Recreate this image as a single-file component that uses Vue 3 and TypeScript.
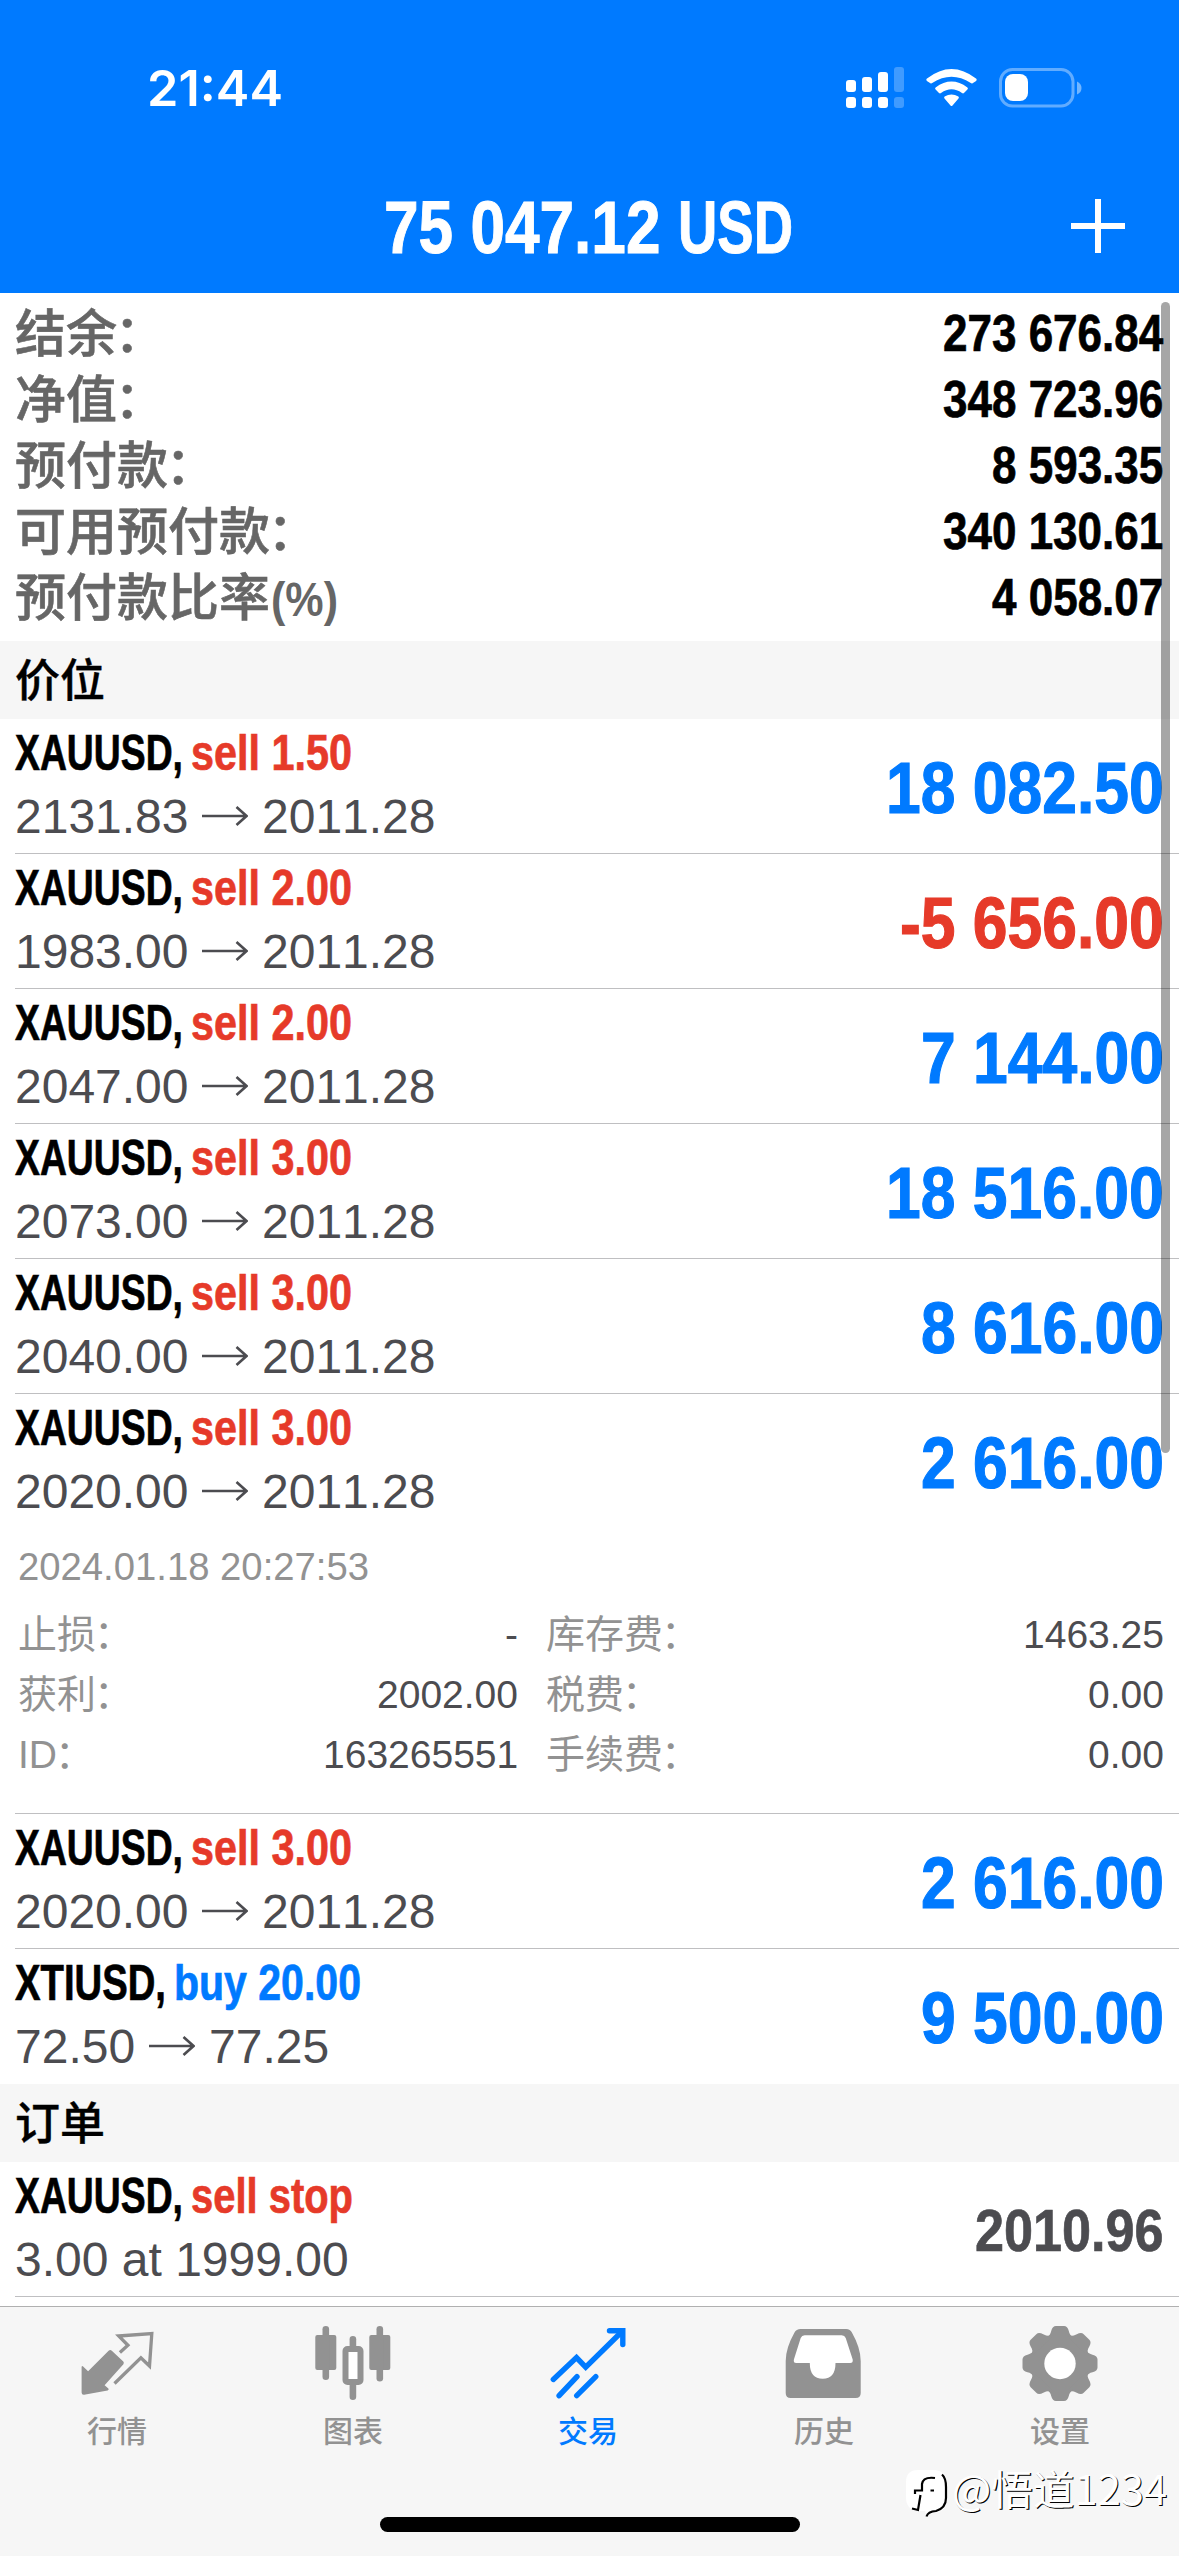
<script setup lang="ts">
import { h, type FunctionalComponent } from 'vue'

interface FitProps {
  text: string
  size: number
  width?: number
  scale?: number
  stretch?: boolean
}

// Advance widths (in em) of the bold sans face; digits are the default, ideographs are one em.
const ADVANCE: Record<string, number> = {
  ' ': 0.278, '.': 0.278, ',': 0.278, ':': 0.278, '-': 0.333, '(': 0.333, ')': 0.333, '%': 0.889,
  A: 0.722, D: 0.722, I: 0.278, S: 0.667, T: 0.611, U: 0.722, X: 0.667,
  b: 0.611, l: 0.278, o: 0.611, p: 0.611, t: 0.333, u: 0.611,
}

const advance = (text: string): number =>
  [...text].reduce((sum, ch) => sum + (ADVANCE[ch] ?? (ch > '\u2fff' ? 1 : 0.556)), 0)

// A single condensed text run; the box is as high as the capitals.
const Fit: FunctionalComponent<FitProps> = (props) => {
  const height = Math.round(props.size * 0.7)
  const natural = advance(props.text) * props.size
  const width = props.width ?? natural * (props.scale ?? 1)
  const sizing = props.stretch
    ? { textLength: width, lengthAdjust: 'spacingAndGlyphs' }
    : { transform: `scale(${(width / natural).toFixed(4)} 1)` }
  // The full-width colon sits a little closer to the word before it.
  const dx = props.text.endsWith('：')
    ? [...props.text].map((ch) => (ch === '：' ? -props.size * 0.05 : 0)).join(' ')
    : undefined
  return h('svg', { width, height, style: { display: 'block', overflow: 'visible', flex: 'none' } }, [
    h('text', { x: 0, y: height, dx, 'font-size': props.size, fill: 'currentColor', ...sizing }, props.text),
  ])
}
Fit.props = { text: String, size: Number, width: Number, scale: Number, stretch: Boolean } as any

const summary = [
  { label: '结余：', value: '273 676.84' },
  { label: '净值：', value: '348 723.96' },
  { label: '预付款：', value: '8 593.35' },
  { label: '可用预付款：', value: '340 130.61' },
  { label: '预付款比率', unit: '(%)', value: '4 058.07' },
]

interface Position {
  symbol: string
  symbolWidth: number
  side: 'sell' | 'buy'
  volume: string
  sideWidth: number
  open: string
  current: string
  profit: string
  details?: boolean
}

const gold = (volume: string, open: string, profit: string, details = false): Position => ({
  symbol: 'XAUUSD,', symbolWidth: 168, side: 'sell', volume, sideWidth: 161,
  open, current: '2011.28', profit, details,
})

const positions: Position[] = [
  gold('1.50', '2131.83', '18 082.50'),
  gold('2.00', '1983.00', '-5 656.00'),
  gold('2.00', '2047.00', '7 144.00'),
  gold('3.00', '2073.00', '18 516.00'),
  gold('3.00', '2040.00', '8 616.00'),
  gold('3.00', '2020.00', '2 616.00', true),
  gold('3.00', '2020.00', '2 616.00'),
  {
    symbol: 'XTIUSD,', symbolWidth: 151, side: 'buy', volume: '20.00', sideWidth: 187,
    open: '72.50', current: '77.25', profit: '9 500.00',
  },
]

const details = [
  { left: '止损：', lv: '-', right: '库存费：', rv: '1463.25' },
  { left: '获利：', lv: '2002.00', right: '税费：', rv: '0.00' },
  { left: 'ID：', lv: '163265551', right: '手续费：', rv: '0.00' },
]

const teeth = [0, 45, 90, 135, 180, 225, 270, 315]
</script>

<template>
  <div class="screen">
    <header class="header">
      <div class="status">
        <Fit class="clock" text="21:44" :size="49" :width="136" stretch />
        <svg class="indicators" width="240" height="44" viewBox="844 66 240 44" fill="#fff">
          <rect x="846" y="80" width="10" height="12" rx="3" />
          <rect x="862" y="77" width="10" height="15" rx="3" />
          <rect x="878" y="72" width="10" height="20" rx="3" />
          <rect x="894" y="67" width="10" height="25" rx="3" opacity=".25" />
          <rect x="846" y="97" width="10" height="11" rx="3" />
          <rect x="862" y="97" width="10" height="11" rx="3" />
          <rect x="878" y="97" width="10" height="11" rx="3" />
          <rect x="894" y="97" width="10" height="11" rx="3" opacity=".25" />
          <path d="M927 78.5Q951.500 59.500 976 78.500Q977.300 79.700 976.100 80.900L972.600 83.200Q971.700 83.800 970.800 83Q951.500 70.500 932.200 83Q931.300 83.800 930.400 83.200L926.900 80.900Q925.700 79.700 927 78.500Z" />
          <path d="M935.600 87.400Q951.500 75.800 967.400 87.400Q968.500 88.400 967.400 89.400L964 93Q963 93.800 962 93Q951.500 85.500 941 93Q940 93.800 939 93L935.600 89.400Q934.500 88.400 935.600 87.400Z" />
          <path d="M944.600 96.600Q951.500 92.600 958.400 96.600Q959.400 97.600 958.500 98.600L952.500 105.400Q951.500 106.400 950.500 105.400L944.500 98.600Q943.600 97.600 944.600 96.600Z" />
          <rect x="1000.500" y="69.500" width="72.500" height="36.500" rx="12" fill="none" stroke="#fff" stroke-width="3" opacity=".38" />
          <rect x="1005" y="74" width="23" height="27" rx="8" />
          <path d="M1077 81.500Q1081.500 83.500 1081.500 88Q1081.500 92.500 1077 94.500Z" opacity=".45" />
        </svg>
      </div>
      <div class="title">
        <div class="amount">
          <Fit text="75 047.12" :size="74" :scale="0.84" />
          <Fit text="USD" :size="75" :width="115" />
        </div>
        <svg class="plus" width="54" height="54" viewBox="0 0 54 54">
          <path d="M0 27H54M27 0V54" stroke="#fff" stroke-width="6" />
        </svg>
      </div>
    </header>

    <section class="summary">
      <div v-for="row in summary" :key="row.label" class="summary-row">
        <div class="summary-label">
          <Fit :text="row.label" :size="51" />
          <Fit v-if="row.unit" class="unit" :text="row.unit" :size="49" :width="67" />
        </div>
        <Fit class="bold" :text="row.value" :size="51" :scale="0.863" />
      </div>
    </section>

    <h2 class="band"><Fit text="价位" :size="45" /></h2>

    <article v-for="(p, i) in positions" :key="i" class="item" :class="{ open: p.details }">
      <div class="row">
        <div class="info">
          <div class="line bold">
            <Fit :text="p.symbol" :size="50" :width="p.symbolWidth" />
            <Fit :class="p.side" :text="`${p.side} ${p.volume}`" :size="50" :width="p.sideWidth" />
          </div>
          <div class="line prices">
            <Fit :text="p.open" :size="48" />
            <svg class="arrow" width="46" height="20" viewBox="0 0 46 20">
              <path d="M0 10H44M34.500 1L44.500 10L34.500 19" fill="none" stroke="currentColor" stroke-width="2.600" />
            </svg>
            <Fit :text="p.current" :size="48" />
          </div>
        </div>
        <Fit class="profit bold" :class="p.profit.startsWith('-') ? 'sell' : 'buy'" :text="p.profit" :size="73" :scale="0.855" />
      </div>
      <div v-if="p.details" class="details">
        <Fit class="muted" text="2024.01.18 20:27:53" :size="39" :width="351" />
        <div class="grid">
          <div v-for="d in details" :key="d.left" class="grid-row">
            <div class="cell first">
              <Fit class="muted" :text="d.left" :size="39" />
              <Fit :text="d.lv" :size="39" />
            </div>
            <div class="cell">
              <Fit class="muted" :text="d.right" :size="39" />
              <Fit :text="d.rv" :size="39" />
            </div>
          </div>
        </div>
      </div>
    </article>

    <h2 class="band"><Fit text="订单" :size="45" /></h2>

    <article class="item">
      <div class="row">
        <div class="info">
          <div class="line bold">
            <Fit text="XAUUSD," :size="50" :width="168" />
            <Fit class="sell" text="sell stop" :size="50" :width="162" />
          </div>
          <div class="line prices"><Fit text="3.00 at 1999.00" :size="48" /></div>
        </div>
        <Fit class="pending bold" text="2010.96" :size="60" :scale="0.87" />
      </div>
    </article>

    <nav class="tabs">
      <a class="tab">
        <svg width="90" height="80" viewBox="72.900 2322 90 80">
          <path d="M81.500 2367Q81.800 2365.500 83 2366.500L88 2371.300L108.500 2350.800Q110.200 2349.300 111.700 2350.800L123.200 2361.500Q124.300 2362.700 123.300 2364.200L104.500 2385.300L108.300 2388.500Q109.200 2390 107.500 2390.500L84 2394.800Q81.500 2395 81.500 2392.500Z" fill="currentColor" />
          <path d="M119.800 2352.500L127.800 2345.300L118.600 2336L151.700 2333.500L149.400 2366L140.800 2357.700L114.400 2383.500" fill="none" stroke="currentColor" stroke-width="3.300" />
        </svg>
        <Fit class="tab-label" text="行情" :size="30" />
      </a>
      <a class="tab">
        <svg width="90" height="80" viewBox="308.700 2322 90 80" fill="currentColor">
          <rect x="315" y="2335" width="21" height="35" rx="2" />
          <rect x="322.200" y="2326" width="6.600" height="54" rx="3.300" />
          <rect x="369" y="2335" width="21" height="35" rx="2" />
          <rect x="376.200" y="2326" width="6.600" height="55.500" rx="3.300" />
          <rect x="349.300" y="2336" width="6.600" height="16" rx="3.300" />
          <rect x="349.300" y="2380" width="6.600" height="20" rx="3.300" />
          <rect x="345.200" y="2349" width="15" height="33" rx="2" fill="#fff" stroke="currentColor" stroke-width="6" />
        </svg>
        <Fit class="tab-label" text="图表" :size="30" />
      </a>
      <a class="tab active">
        <svg width="90" height="80" viewBox="544.500 2322 90 80" fill="none" stroke="currentColor" stroke-width="5.400">
          <path d="M553.800 2379.500L577 2357.600L586.200 2367.200L622.500 2331.500" stroke-linecap="round" stroke-linejoin="miter" />
          <path d="M610 2330.800H623.300V2344.500" stroke-linecap="round" />
          <path d="M559.600 2395.700L577.500 2376.700M577.200 2395.700L596.300 2376.700" stroke-linecap="round" />
        </svg>
        <Fit class="tab-label" text="交易" :size="30" />
      </a>
      <a class="tab">
        <svg width="90" height="80" viewBox="780.300 2322 90 80">
          <path d="M801 2329H846.500Q850.500 2329 852.200 2332.500Q861 2348 861 2361V2393Q861 2398 856 2398H791Q786 2398 786 2393V2361Q786 2348 794.800 2332.500Q796.500 2329 801 2329Z" fill="currentColor" />
          <path d="M805 2335.300H842Q845 2335.300 846 2338L853 2359.500Q853.500 2363 850.500 2363H835.800Q835.800 2378.700 823 2378.700Q810.100 2378.700 810.100 2363H796.500Q793.500 2363 794.200 2359.500L801 2338Q802 2335.300 805 2335.300Z" fill="#fff" />
        </svg>
        <Fit class="tab-label" text="历史" :size="30" />
      </a>
      <a class="tab">
        <svg width="90" height="80" viewBox="1015.700 2322 90 80">
          <g transform="translate(1059.700 2363.500)">
            <circle r="30" fill="currentColor" />
            <path v-for="a in teeth" :key="a" :transform="`rotate(${a})`" d="M-14 -25Q-9.500 -28.500 -8.800 -32.500Q-7.500 -37.500 -4 -37.500H4Q7.500 -37.500 8.800 -32.500Q9.500 -28.500 14 -25Z" fill="currentColor" />
            <circle r="15.700" fill="#fff" />
          </g>
        </svg>
        <Fit class="tab-label" text="设置" :size="30" />
      </a>
    </nav>

    <div class="scrollbar"></div>
    <div class="home"></div>
    <div class="watermark">
      <svg width="42" height="48" viewBox="0 0 42 48">
        <path d="M12 0H27Q41 0 41 14V30Q41 40 31 42.500Q23 43 21 48L19 41H12Q0 40 0 27V12Q0 0 12 0Z" fill="#fff" />
        <path d="M36 4.500Q40 8 40 17V28Q40 38 30 41Q22 41.500 20.500 46.500" fill="none" stroke="#000" stroke-width="2.200" />
        <path d="M29 8Q17 6.500 16 14V20.500H9V24M14.500 25L12 40L6 38.500M24.500 20.500H28" fill="none" stroke="#000" stroke-width="2.200" />
      </svg>
      <Fit class="handle" text="@悟道1234" :size="41" :width="215" stretch />
    </div>
  </div>
</template>

<style>
body {
  margin: 0;
  background: #fff;
}
</style>

<style scoped>
.screen {
  position: relative;
  width: 1179px;
  height: 2556px;
  overflow: hidden;
  display: flex;
  flex-direction: column;
  background: #fff;
  color: #000;
  font-family: "Liberation Sans", "Noto Sans CJK SC", sans-serif;
  font-kerning: none;
}

.header {
  flex: none;
  height: 293px;
  background: #007aff;
  color: #fff;
}

.status {
  display: flex;
  justify-content: space-between;
  align-items: flex-start;
  padding: 66px 95px 0 147px;
  height: 44px;
}

.clock {
  margin-top: 6px;
  font-family: Inter, sans-serif;
  font-weight: 600;
}

.title {
  display: flex;
  align-items: flex-start;
  justify-content: flex-end;
  margin-top: 89px;
  padding-right: 54px;
}

.amount {
  display: flex;
  align-items: flex-end;
  gap: 18px;
  margin: 1px 278px 0 0;
  font-weight: 700;
  stroke: currentColor;
  stroke-width: 1px;
}

.bold {
  font-weight: 700;
  stroke: currentColor;
  stroke-width: 0.7px;
}

.summary {
  flex: none;
  box-sizing: border-box;
  height: 348px;
  padding: 22px 16px 0 15px;
  display: flex;
  flex-direction: column;
  gap: 30px;
}

.summary-row {
  display: flex;
  justify-content: space-between;
  align-items: flex-start;
  height: 36px;
}

.summary-label {
  display: flex;
  align-items: flex-end;
  margin-top: 1px;
  color: #666;
  font-family: "Noto Sans CJK SC", sans-serif;
  font-weight: 500;
  stroke: currentColor;
  stroke-width: 0.6px;
}

.unit {
  margin-left: 1px;
  font-family: "Liberation Sans", sans-serif;
  font-weight: 700;
  stroke: none;
}

.band {
  flex: none;
  box-sizing: border-box;
  height: 78px;
  margin: 0;
  padding: 25px 0 0 15px;
  background: #f6f6f6;
  font-family: "Noto Sans CJK SC", sans-serif;
  font-weight: 500;
  stroke: currentColor;
  stroke-width: 0.4px;
}

.item {
  flex: none;
  box-sizing: border-box;
  height: 135px;
  margin-left: 15px;
  border-bottom: 1px solid #bfbfc1;
}

.item.open {
  height: 420px;
}

.item:has(+ .band) {
  border-bottom: none;
}

.row {
  display: flex;
  justify-content: space-between;
  align-items: flex-start;
  padding-right: 15px;
  height: 134px;
}

.info {
  padding-top: 16px;
  display: flex;
  flex-direction: column;
  gap: 29px;
}

.line {
  display: flex;
  gap: 8px;
}

.prices {
  gap: 14px;
  color: #4c4c50;
}

.arrow {
  margin-top: 7px;
}

.profit {
  margin-top: 43px;
  stroke-width: 1.2px;
}

.pending {
  margin-top: 47px;
  color: #4c4c50;
}

.sell {
  color: #e63a29;
}

.buy {
  color: #007aff;
}

.muted {
  color: #929292;
}

.details {
  padding: 25px 15px 0 3px;
  color: #4c4c50;
}

.grid {
  display: flex;
  flex-direction: column;
  gap: 33px;
  margin-top: 41px;
}

.grid-row {
  display: flex;
  gap: 28px;
}

.cell {
  flex: 1;
  display: flex;
  justify-content: space-between;
}

.cell.first {
  flex: none;
  width: 500px;
}

.tabs {
  flex: none;
  box-sizing: border-box;
  height: 250px;
  margin-top: 9px;
  padding-top: 15px;
  border-top: 1px solid #b0b0b0;
  background: #f6f6f6;
  display: flex;
  font-family: "Noto Sans CJK SC", sans-serif;
  font-weight: 500;
  color: #929292;
}

.tab {
  flex: 1;
  display: flex;
  flex-direction: column;
  align-items: center;
  gap: 19px;
}

.tab-label {
  margin-right: 2px;
}

.tab.active {
  color: #007aff;
}

.scrollbar {
  position: absolute;
  left: 1161px;
  top: 302px;
  width: 9px;
  height: 1151px;
  border-radius: 4.5px;
  background: rgba(0, 0, 0, 0.35);
}

.home {
  position: absolute;
  left: 380px;
  top: 2517px;
  width: 420px;
  height: 15px;
  border-radius: 7.5px;
  background: #000;
}

.watermark {
  position: absolute;
  left: 906px;
  top: 2470px;
  display: flex;
  gap: 4px;
  color: #fff;
}

.handle {
  margin-top: 6px;
  font-family: "Noto Sans CJK SC", sans-serif;
  font-weight: 400;
  text-shadow: 1px 1px 0.5px #000;
}
</style>
